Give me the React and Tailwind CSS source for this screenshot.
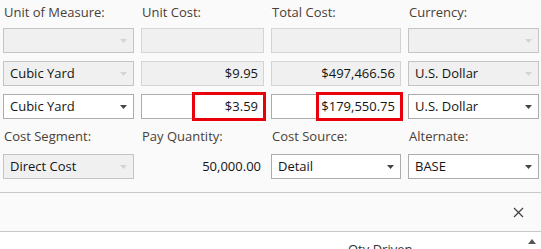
import React from "react";

const font = { fontFamily: '"Open Sans", "Noto Sans", "DejaVu Sans", sans-serif' };

function Arrow({ disabled }) {
  return (
    <svg width="7" height="4" viewBox="0 0 7 4" className="shrink-0">
      <path d="M0 0 L7 0 L3.5 4 Z" fill={disabled ? "#d4d4d4" : "#444"} />
    </svg>
  );
}

function Combo({ text, disabled }) {
  return (
    <div
      className={`h-[25px] flex items-center justify-between pl-[6px] pr-[6px] border ${
        disabled ? "bg-[#f0f0f0] border-[#c4c4c4]" : "bg-white border-[#acacac]"
      }`}
    >
      <span className="text-[13px] text-[#141414] leading-none">{text}</span>
      <Arrow disabled={disabled} />
    </div>
  );
}

function Field({ text, disabled, highlight }) {
  return (
    <div
      className={`relative h-[25px] flex items-center justify-end pr-[5px] border ${
        disabled ? "bg-[#f0f0f0] border-[#d4d4d4]" : "bg-white border-[#acacac]"
      }`}
    >
      <span className="text-[13px] text-[#141414] leading-none relative z-10">{text}</span>
      {highlight && (
        <div
          className="absolute top-[-3px] bottom-[-3px] right-[-3px] border-[3px] border-[#e8000b]"
          style={{ width: highlight }}
        />
      )}
    </div>
  );
}

function Label({ children }) {
  return <div className="h-[24px] flex items-center text-[13px] text-[#4a4036] pl-[1px]">{children}</div>;
}

export default function App() {
  return (
    <div className="w-[541px] h-[249px] bg-[#fafafa] overflow-hidden relative" style={font}>
      <div className="pl-[3px] pr-[1px] pt-[1px] grid grid-cols-[131px_123px_130px_131px] gap-x-[7px]">
        <Label>Unit of Measure:</Label>
        <Label>Unit Cost:</Label>
        <Label>Total Cost:</Label>
        <Label>Currency:</Label>

        <div className="mt-[3px]"><Combo text="" disabled /></div>
        <div className="mt-[3px]"><Field text="" disabled /></div>
        <div className="mt-[3px]"><Field text="" disabled /></div>
        <div className="mt-[3px]"><Combo text="" disabled /></div>

        <div className="mt-[8px]"><Combo text="Cubic Yard" disabled /></div>
        <div className="mt-[8px]"><Field text="$9.95" disabled /></div>
        <div className="mt-[8px]"><Field text="$497,466.56" disabled /></div>
        <div className="mt-[8px]"><Combo text="U.S. Dollar" disabled /></div>

        <div className="mt-[8px]"><Combo text="Cubic Yard" /></div>
        <div className="mt-[8px]"><Field text="$3.59" highlight="74px" /></div>
        <div className="mt-[8px]"><Field text="$179,550.75" highlight="87px" /></div>
        <div className="mt-[8px]"><Combo text="U.S. Dollar" /></div>

        <div className="mt-[6px]"><Label>Cost Segment:</Label></div>
        <div className="mt-[6px]"><Label>Pay Quantity:</Label></div>
        <div className="mt-[6px]"><Label>Cost Source:</Label></div>
        <div className="mt-[6px]"><Label>Alternate:</Label></div>

        <div className="mt-[5px]"><Combo text="Direct Cost" disabled /></div>
        <div className="mt-[5px] h-[25px] flex items-center justify-end pr-[3px] text-[13px] text-[#141414]">50,000.00</div>
        <div className="mt-[5px]"><Combo text="Detail" /></div>
        <div className="mt-[5px]"><Combo text="BASE" /></div>
      </div>

      <div className="mt-[13px] border-t border-[#c8c8c8] h-[39px] flex items-center justify-end pr-[17px]">
        <svg width="11" height="11" viewBox="0 0 11 11">
          <path d="M1 1 L10 10 M10 1 L1 10" stroke="#444" strokeWidth="1.3" />
        </svg>
      </div>
      <div className="border-t border-[#c8c8c8] bg-white h-[20px] relative">
        <div className="absolute left-[348px] top-[9px] text-[13px] leading-[16px] text-[#333]">Qty Driven</div>
        <svg className="absolute right-[5px] top-[7px]" width="8" height="5" viewBox="0 0 8 5">
          <path d="M0 5 L8 5 L4 0 Z" fill="#555" />
        </svg>
      </div>
    </div>
  );
}
